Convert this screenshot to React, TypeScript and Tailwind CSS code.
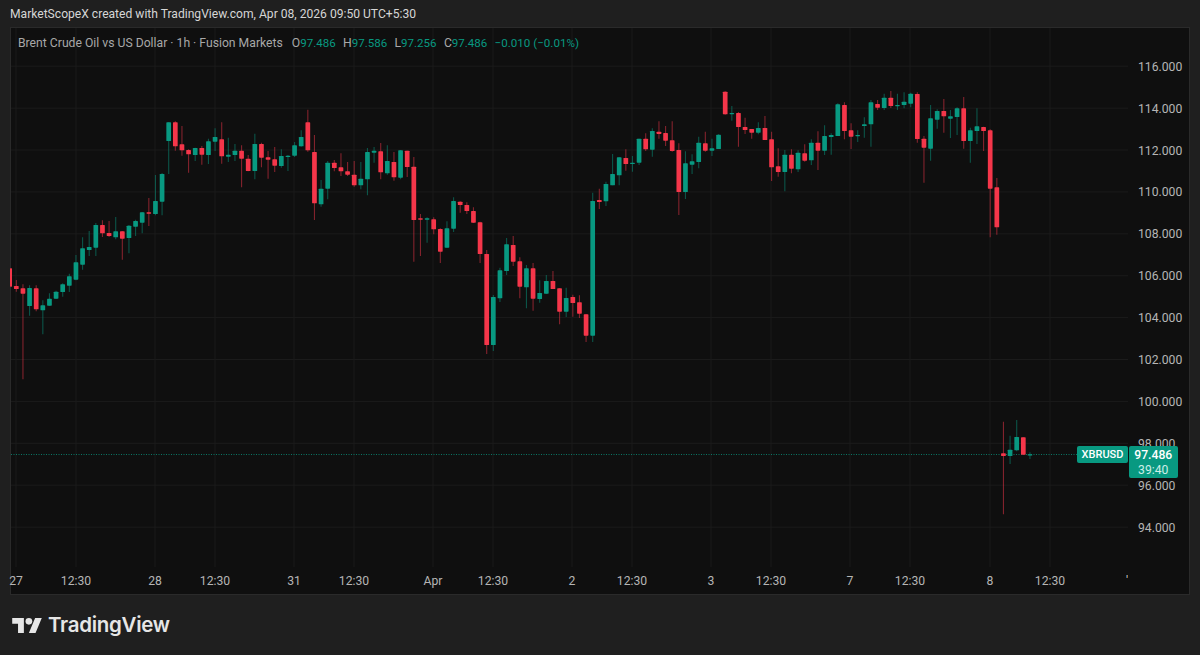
type Row = [string, number, number, number, number]

// candle rows read off the chart at 3x: colour, wick top, body top, body bottom, wick bottom
const sec1: Row[] = [
  ["r", 505, 505, 560, 560], ["r", 540, 558, 567, 575], ["r", 553, 565, 581, 838], ["g", 556, 564, 618, 647],
  ["r", 556, 565, 628, 634], ["g", 601, 616, 631, 703], ["g", 580, 596, 617, 617], ["g", 572, 575, 596, 597],
  ["g", 550, 553, 576, 590], ["g", 521, 529, 557, 576], ["g", 465, 487, 539, 541], ["g", 412, 445, 494, 509],
  ["g", 393, 441, 450, 468], ["g", 369, 375, 443, 468], ["r", 361, 375, 400, 411], ["r", 363, 399, 408, 411],
  ["g", 351, 394, 412, 418], ["r", 393, 394, 416, 479], ["g", 375, 377, 414, 460], ["g", 359, 363, 380, 408],
  ["g", 336, 337, 368, 400], ["r", 294, 337, 341, 378], ["g", 225, 303, 342, 346], ["g", 219, 222, 305, 346],
  ["g", 67, 67, 123, 222], ["r", 64, 67, 139, 152], ["r", 78, 133, 151, 167], ["r", 148, 150, 163, 218],
  ["g", 143, 144, 165, 183], ["r", 138, 144, 164, 194], ["g", 116, 124, 165, 192], ["g", 85, 111, 125, 153],
  ["r", 67, 118, 169, 191], ["g", 113, 164, 170, 186], ["g", 132, 152, 165, 183], ["r", 136, 152, 176, 262],
  ["r", 165, 176, 213, 214], ["g", 101, 132, 213, 238], ["r", 128, 132, 173, 202], ["r", 153, 172, 179, 236],
  ["r", 141, 178, 197, 216], ["g", 148, 168, 198, 203], ["g", 165, 167, 171, 213], ["g", 126, 136, 167, 171],
  ["g", 91, 111, 139, 140], ["r", 29, 67, 151, 155], ["r", 105, 156, 310, 360], ["g", 240, 266, 313, 320],
  ["g", 183, 188, 266, 298], ["r", 180, 188, 204, 214], ["r", 160, 202, 214, 228], ["r", 186, 214, 224, 228],
  ["r", 183, 224, 256, 260], ["g", 186, 236, 256, 268], ["g", 144, 156, 238, 286], ["g", 141, 152, 158, 188],
  ["r", 129, 154, 217, 238], ["g", 136, 183, 220, 224], ["r", 156, 186, 232, 242], ["g", 150, 151, 233, 238],
  ["r", 152, 152, 201, 231], ["r", 171, 200, 360, 485], ["r", 342, 355, 359, 468], ["g", 352, 355, 359, 428],
  ["r", 352, 358, 388, 403], ["r", 385, 387, 455, 489], ["g", 364, 385, 443, 443], ["g", 292, 303, 386, 396],
  ["r", 304, 305, 315, 338], ["r", 307, 315, 333, 342], ["r", 322, 333, 368, 369], ["r", 365, 367, 462, 489],
  ["r", 450, 462, 735, 762], ["g", 585, 591, 735, 753], ["g", 503, 511, 595, 606], ["g", 414, 433, 513, 525],
  ["r", 408, 435, 485, 498], ["r", 472, 484, 560, 595], ["g", 495, 505, 562, 625], ["r", 489, 505, 596, 632],
  ["g", 541, 579, 597, 608], ["g", 525, 543, 581, 582], ["r", 513, 543, 567, 567], ["r", 565, 565, 635, 673],
  ["g", 563, 594, 635, 651], ["r", 584, 591, 609, 650], ["r", 586, 607, 641, 654], ["r", 642, 643, 707, 726],
  ["g", 278, 303, 707, 726],
]

const sec2: Row[] = [
  ["r", 326, 360, 366, 387], ["g", 305, 312, 364, 378], ["g", 222, 282, 316, 316], ["g", 232, 232, 286, 316],
  ["r", 208, 234, 252, 272], ["g", 228, 248, 252, 275], ["g", 176, 176, 248, 255], ["r", 160, 176, 208, 213],
  ["g", 145, 153, 209, 230], ["r", 124, 155, 162, 176], ["r", 138, 159, 182, 198], ["r", 124, 181, 213, 215],
  ["r", 190, 210, 336, 405], ["g", 214, 250, 336, 357], ["g", 223, 244, 254, 282], ["g", 170, 188, 246, 265],
  ["r", 155, 190, 212, 215], ["g", 176, 205, 212, 228], ["g", 163, 164, 207, 207], ["r", 34, 35, 103, 104],
  ["g", 78, 99, 102, 122], ["r", 96, 99, 141, 200], ["r", 113, 141, 150, 162], ["r", 147, 147, 158, 176],
  ["g", 127, 144, 158, 163], ["r", 108, 144, 180, 180], ["r", 155, 178, 262, 303], ["r", 205, 259, 276, 290],
  ["g", 210, 224, 276, 334], ["r", 208, 224, 266, 280], ["g", 211, 218, 268, 276], ["r", 193, 220, 242, 245],
  ["g", 178, 188, 241, 255], ["r", 154, 188, 212, 270], ["g", 136, 168, 212, 225], ["g", 160, 165, 171, 224],
  ["g", 70, 73, 168, 168], ["r", 67, 75, 153, 178], ["r", 130, 151, 170, 207], ["g", 151, 165, 168, 186],
  ["g", 112, 133, 138, 173], ["g", 60, 67, 133, 200], ["r", 60, 72, 83, 90], ["g", 41, 53, 84, 90],
  ["r", 33, 53, 78, 84], ["g", 41, 75, 78, 90], ["g", 37, 65, 75, 85], ["g", 38, 41, 71, 82],
  ["r", 37, 42, 177, 188], ["r", 168, 176, 203, 308], ["g", 75, 115, 206, 242], ["g", 88, 93, 119, 146],
  ["r", 57, 93, 109, 158], ["g", 90, 109, 116, 174], ["g", 82, 85, 111, 165], ["r", 51, 85, 183, 206],
  ["g", 143, 151, 183, 248], ["g", 85, 139, 153, 192], ["r", 140, 141, 153, 213], ["r", 148, 151, 326, 472],
  ["r", 294, 322, 442, 464],
]

const sec3: Row[] = [
  ["r", 35, 130, 138, 313], ["g", 77, 119, 138, 162], ["g", 30, 81, 121, 124], ["r", 82, 82, 134, 134],
  ["g", 127, 133, 135, 147],
]

const scale = (top: number, rows: Row[]) =>
  rows.map(([c, a, b, d, e]) => ({ c, wt: top + a / 3, bt: top + b / 3, bb: top + d / 3, wb: top + e / 3 }))

const candles = [...scale(100, sec1), ...scale(80, sec2), ...scale(410, sec3)]

const prices = ["116.000", "114.000", "112.000", "110.000", "108.000", "106.000", "104.000", "102.000", "100.000", "98.000", "96.000", "94.000"]

const times = [
  ["27", 16], ["12:30", 76], ["28", 155], ["12:30", 215], ["31", 294], ["12:30", 354], ["Apr", 433], ["12:30", 493],
  ["2", 572], ["12:30", 632], ["3", 711], ["12:30", 771], ["7", 850], ["12:30", 910], ["8", 990], ["12:30", 1050],
] as const

const RED = "#f5364a"
const GREEN = "#089981"

function Chart() {
  return (
    <svg viewBox="11 28 1117 539" className="absolute inset-0 h-[539px] w-[1117px] overflow-visible">
      {prices.map((_, i) => (
        <line key={i} x1={11} x2={1128} y1={66.2 + i * 41.9} y2={66.2 + i * 41.9} stroke="#1b1b1b" />
      ))}
      {times.map(([, x], i) => (
        <line key={i} x1={x} x2={x} y1={28} y2={567} stroke="#1b1b1b" />
      ))}
      <line x1={11} x2={1078} y1={454.5} y2={454.5} stroke={GREEN} strokeDasharray="1 1.5" strokeOpacity={0.75} />
      {candles.map((k, i) => {
        const x = 9.7 + i * 6.625
        const col = k.c === "r" ? RED : GREEN
        // first bar is cut off by the left edge of the chart
        if (i === 0) return <rect key={i} x={10} y={k.bt} width={2} height={k.bb - k.bt} fill={col} />
        return (
          <g key={i}>
            <line x1={x} x2={x} y1={k.wt} y2={k.wb} stroke={col} strokeOpacity={0.5} strokeWidth={1.1} />
            <rect x={x - 2.35} y={k.bt} width={4.7} height={Math.max(k.bb - k.bt, 1.2)} rx={0.6} fill={col} />
          </g>
        )
      })}
    </svg>
  )
}

function Legend() {
  const vals = [["O", "97.486"], ["H", "97.586"], ["L", "97.256"], ["C", "97.486"]]
  return (
    <div className="absolute left-[7px] top-[7px] flex items-center text-[12.2px] leading-[16px] text-[#a8a8a8]">
      <span className="mr-[9px]">Brent Crude Oil vs US Dollar · 1h · Fusion Markets</span>
      {vals.map(([k, v]) => (
        <span key={k} className="mr-[7.3px]">
          {k}
          <span className="text-[11.55px] text-[#089981]">{v}</span>
        </span>
      ))}
      <span className="text-[11.6px] text-[#089981]">−0.010 (−0.01%)</span>
    </div>
  )
}

export default function App() {
  return (
    <div className="relative flex h-[655px] w-[1200px] flex-col overflow-hidden bg-[#1f1f1f] px-[10px] font-['Roboto',sans-serif]">
      <div className="flex h-[27px] items-center pt-[2px] text-[12.1px] text-[#d6d6d6]">
        MarketScopeX created with TradingView.com, Apr 08, 2026 09:50 UTC+5:30
      </div>
      <div className="flex h-[568px] flex-col border border-[#2a2a2a] bg-[#0f0f0f]">
        <div className="flex h-[539px]">
          <div className="relative w-[1117px]">
            <Chart />
            <Legend />
          </div>
          <div className="flex flex-1 flex-col pl-[10px] pt-[18px] text-[12.2px] text-[#b5b5b5]">
            {prices.map((p) => (
              <div key={p} className="flex h-[41.9px] items-center">
                {p}
              </div>
            ))}
          </div>
        </div>
        <div className="relative flex-1 text-[12.2px] text-[#b5b5b5]">
          {times.map(([t, x], i) => (
            <span key={i} className="absolute top-[5px] -translate-x-1/2" style={{ left: x - 11 }}>
              {t}
            </span>
          ))}
          <span className="absolute left-[1115px] top-[5px] w-[2px] overflow-hidden text-[#d0d0d0]">'</span>
        </div>
      </div>
      <div className="flex flex-1 items-center gap-[6px] pl-[2px]">
        <svg viewBox="0 4 35.5 18" className="h-[15px] w-[30px] fill-[#e6e6e6]">
          <path d="M14 22H7V11H0V4h14v18zM28 22h-8l7.5-18h8L28 22z" />
          <circle cx="20" cy="8" r="4" />
        </svg>
        <span className="font-['Inter',sans-serif] text-[20.5px] font-semibold tracking-[-0.3px] text-[#e6e6e6]">TradingView</span>
      </div>
      <div className="absolute left-[1077px] top-[446px] flex">
        <div className="flex h-[17px] w-[51px] items-center justify-center rounded-[2px] bg-[#089981] pt-[1px] text-[11px] font-medium text-white">XBRUSD</div>
        <div className="ml-[0.5px] flex h-[32px] w-[49.5px] flex-col items-center rounded-[2px] bg-[#089981] pt-[2px] text-[12.2px] font-medium leading-[15px] text-white">
          <span>97.486</span>
          <span className="font-normal text-[#cdeee7]">39:40</span>
        </div>
      </div>
    </div>
  )
}
